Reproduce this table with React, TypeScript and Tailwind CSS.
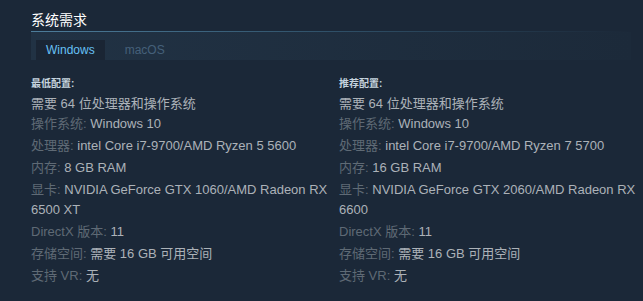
import React from "react";

type Spec = { label: string; value: string };

const MIN: Spec[] = [
  { label: "操作系统:", value: "Windows 10" },
  { label: "处理器:", value: "intel Core i7-9700/AMD Ryzen 5 5600" },
  { label: "内存:", value: "8 GB RAM" },
  { label: "显卡:", value: "NVIDIA GeForce GTX 1060/AMD Radeon RX 6500 XT" },
  { label: "DirectX 版本:", value: "11" },
  { label: "存储空间:", value: "需要 16 GB 可用空间" },
  { label: "支持 VR:", value: "无" },
];

const REC: Spec[] = [
  { label: "操作系统:", value: "Windows 10" },
  { label: "处理器:", value: "intel Core i7-9700/AMD Ryzen 7 5700" },
  { label: "内存:", value: "16 GB RAM" },
  { label: "显卡:", value: "NVIDIA GeForce GTX 2060/AMD Radeon RX 6600" },
  { label: "DirectX 版本:", value: "11" },
  { label: "存储空间:", value: "需要 16 GB 可用空间" },
  { label: "支持 VR:", value: "无" },
];

function ReqColumn({ title, specs }: { title: string; specs: Spec[] }) {
  return (
    <div>
      <div className="text-[10px] leading-[12px] font-bold text-[#c6d4df] mb-[4px]">{title}</div>
      <ul className="text-[13px] leading-[20px] text-[#acb2b8]">
        <li>需要 64 位处理器和操作系统</li>
        {specs.map((s, i) => (
          <li key={s.label} className={i === 0 ? "" : "mt-[2px]"}>
            <span className="text-[#5f6a75]">{s.label}</span> {s.value}
          </li>
        ))}
      </ul>
    </div>
  );
}

export default function App() {
  return (
    <div className="w-[643px] h-[301px] bg-[#1b2838] font-['Liberation_Sans','Noto_Sans_CJK_SC',sans-serif] overflow-hidden">
      <div className="pl-[31px] pt-[10px]">
        <h2 className="text-[14px] leading-[20px] text-white">系统需求</h2>

        {/* OS tabs */}
        <div className="mt-px w-[600px]">
          <div className="h-px bg-linear-to-r from-[#4d7d9b] via-[#2f5068] to-transparent" />
          <div className="h-[28px] pl-[5px] pt-[8px] flex items-stretch bg-linear-to-r from-[#213244] to-[#1c2a3a]">
            <div className="h-[20px] px-[10px] flex items-center bg-[#1a2534] text-[12px] text-[#67c1f5]">
              Windows
            </div>
            <div className="h-[20px] px-[20px] flex items-center text-[12px] text-[#45607a]">macOS</div>
          </div>
        </div>

        <div className="mt-[18px] grid grid-cols-[300px_298px] gap-x-[8px]">
          <ReqColumn title="最低配置:" specs={MIN} />
          <ReqColumn title="推荐配置:" specs={REC} />
        </div>
      </div>
    </div>
  );
}
